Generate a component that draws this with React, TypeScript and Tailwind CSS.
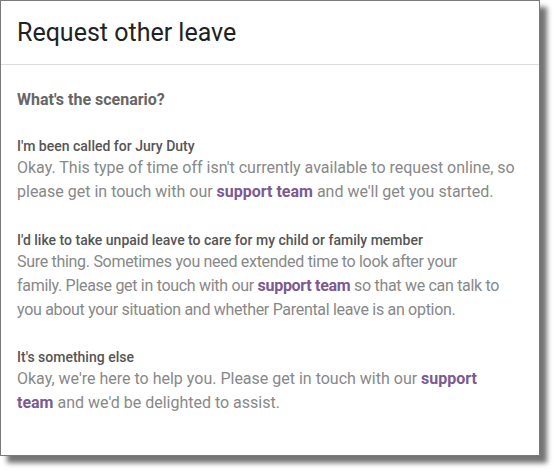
export default function App() {
  const link = "font-bold text-[#7b5a93]";

  return (
    <div className="min-h-screen w-[555px] h-[472px] bg-white font-['Roboto',sans-serif]">
      <div className="w-[540px] h-[456px] bg-white border border-[#7a7a7a] shadow-[7px_7px_5px_rgba(0,0,0,0.55)] flex flex-col">
        {/* Header */}
        <div className="h-[64px] border-b border-[#dddddd] flex items-center px-[16px]">
          <h1 className="text-[25px] leading-[32px] text-[#222222]">Request other leave</h1>
        </div>

        {/* Body */}
        <div className="pl-[16px] pr-[12px] pt-[25px] text-[#888888]">
          <p className="text-[16px] leading-[20px] font-bold text-[#666666]">What's the scenario?</p>

          <div className="mt-[26px]">
            <p className="text-[14px] leading-[20px] font-medium text-[#555555]">I'm been called for Jury Duty</p>
            <p className="text-[16px] leading-[24px]">
              Okay. This type of time off isn't currently available to request online, so please get in touch
              with our <span className={link}>support team</span> and we'll get you started.
            </p>
          </div>

          <div className="mt-[26px]">
            <p className="text-[14px] leading-[20px] font-medium text-[#555555]">
              I'd like to take unpaid leave to care for my child or family member
            </p>
            <p className="text-[16px] leading-[24px] tracking-[-0.3px] whitespace-nowrap">
              Sure thing. Sometimes you need extended time to look after your
              <br />
              family. Please get in touch with our <span className={link}>support team</span> so that we can talk to
              <br />
              you about your situation and whether Parental leave is an option.
            </p>
          </div>

          <div className="mt-[25px]">
            <p className="text-[14px] leading-[20px] font-medium text-[#555555]">It's something else</p>
            <p className="text-[16px] leading-[24px]">
              Okay, we're here to help you. Please get in touch with our <span className={link}>support</span>
              <br />
              <span className={link}>team</span> and we'd be delighted to assist.
            </p>
          </div>
        </div>
      </div>
    </div>
  );
}
